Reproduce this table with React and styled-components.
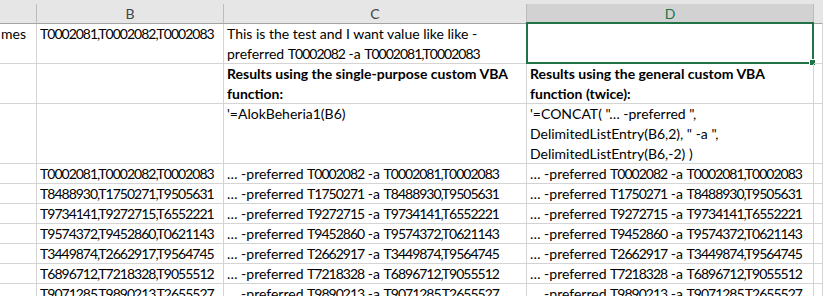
import React from "react";
import styled, { createGlobalStyle } from "styled-components";

const Global = createGlobalStyle`
  html, body { margin: 0; padding: 0; background: #ffffff; }
  body { font-family: Lato, "Open Sans", sans-serif; }
`;

const Wrap = styled.div`
  width: 823px;
  height: 296px;
  overflow: hidden;
  background: #fff;
`;

const TopStrip = styled.div`
  height: 4px;
  background: #e6e6e6;
`;

const Grid = styled.div`
  display: grid;
  grid-template-columns: 37px 187px 303px 287px 1fr;
  grid-template-rows: 20px 40px 40px 60px repeat(7, 20px);
  font-family: Lato, "Open Sans", sans-serif;
  font-size: 14px;
  line-height: 20px;
  color: #000;
`;

const Head = styled.div`
  box-sizing: border-box;
  background: ${(p) => (p.$active ? "#d2d2d2" : "#e6e6e6")};
  color: ${(p) => (p.$active ? "#217346" : "#444")};
  border-right: 1px solid ${(p) => (p.$last ? "transparent" : "#bcbcbc")};
  border-bottom: 1px solid #a3a3a3;
  display: flex;
  align-items: center;
  justify-content: center;
  line-height: 19px;
`;

const Cell = styled.div`
  box-sizing: border-box;
  position: relative;
  border-right: 1px solid #d4d4d4;
  border-bottom: 1px solid #d4d4d4;
  padding-left: ${(p) => (p.$pad ?? 3)}px;
  font-weight: ${(p) => (p.$bold ? 700 : 400)};
  white-space: nowrap;
  overflow: ${(p) => (p.$visible ? "visible" : "hidden")};
`;

const Ids = styled.span`
  letter-spacing: -1px;
`;

const Selection = styled.div`
  position: absolute;
  left: -1px;
  top: -2px;
  right: -1px;
  bottom: -1px;
  border: 2px solid #217346;
  pointer-events: none;
`;

const Handle = styled.div`
  position: absolute;
  right: -4px;
  bottom: -4px;
  width: 5px;
  height: 5px;
  background: #217346;
  border: 1px solid #fff;
`;

const data = [
  ["T0002081", "T0002082", "T0002083"],
  ["T8488930", "T1750271", "T9505631"],
  ["T9734141", "T9272715", "T6552221"],
  ["T9574372", "T9452860", "T0621143"],
  ["T3449874", "T2662917", "T9564745"],
  ["T6896712", "T7218328", "T9055512"],
  ["T9071285", "T9890213", "T2655527"],
];

function Result({ r }) {
  return (
    <>
      … -preferred <Ids>{r[1]}</Ids> -a <Ids>{`${r[0]},${r[2]}`}</Ids>
    </>
  );
}

export default function App() {
  return (
    <Wrap>
      <Global />
      <TopStrip />
      <Grid>
        <Head />
        <Head>B</Head>
        <Head>C</Head>
        <Head $active>D</Head>
        <Head $last />

        <Cell $pad={1}>mes</Cell>
        <Cell>
          <Ids>T0002081,T0002082,T0002083</Ids>
        </Cell>
        <Cell>
          This is the test and I want value like like -
          <br />
          preferred <Ids>T0002082</Ids> -a <Ids>T0002081,T0002083</Ids>
        </Cell>
        <Cell $visible>
          <Selection>
            <Handle />
          </Selection>
        </Cell>
        <Cell />

        <Cell />
        <Cell />
        <Cell $bold>
          Results using the single-purpose custom VBA
          <br />
          function:
        </Cell>
        <Cell $bold>
          Results using the general custom VBA
          <br />
          function (twice):
        </Cell>
        <Cell />

        <Cell />
        <Cell />
        <Cell>'=AlokBeheria1(B6)</Cell>
        <Cell>
          '=CONCAT( "… -preferred ",
          <br />
          DelimitedListEntry(B6,2), " -a ",
          <br />
          DelimitedListEntry(B6,-2) )
        </Cell>
        <Cell />

        {data.map((r, i) => (
          <React.Fragment key={i}>
            <Cell />
            <Cell>
              <Ids>{r.join(",")}</Ids>
            </Cell>
            <Cell>
              <Result r={r} />
            </Cell>
            <Cell>
              <Result r={r} />
            </Cell>
            <Cell />
          </React.Fragment>
        ))}
      </Grid>
    </Wrap>
  );
}
